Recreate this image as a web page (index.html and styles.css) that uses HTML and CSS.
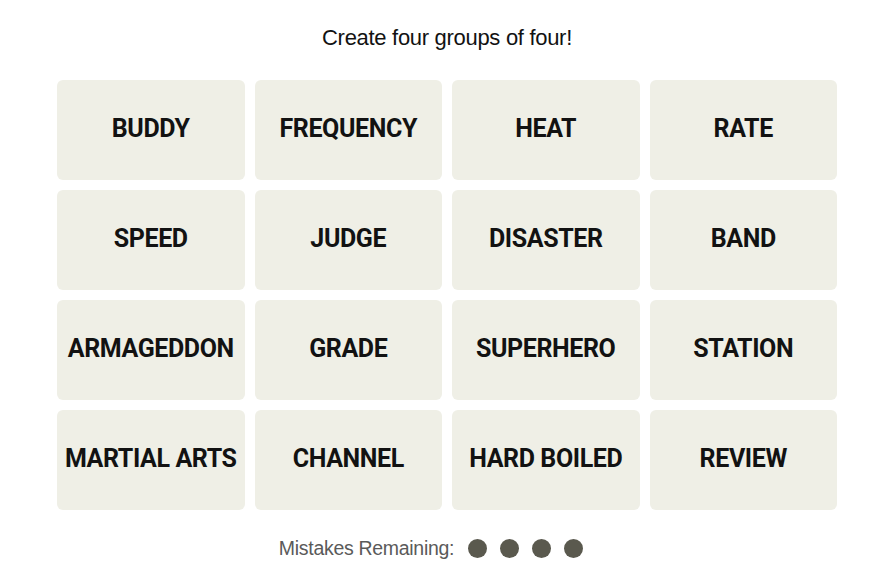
FILE: index.html
```html
<!DOCTYPE html>
<html>
<head>
<meta charset="utf-8">
<link rel="stylesheet" href="styles.css">
</head>
<body>
<main class="game">
  <p class="prompt">Create four groups of four!</p>
  <div class="board">
    <div class="tile">BUDDY</div>
    <div class="tile">FREQUENCY</div>
    <div class="tile">HEAT</div>
    <div class="tile">RATE</div>
    <div class="tile">SPEED</div>
    <div class="tile">JUDGE</div>
    <div class="tile">DISASTER</div>
    <div class="tile">BAND</div>
    <div class="tile">ARMAGEDDON</div>
    <div class="tile">GRADE</div>
    <div class="tile">SUPERHERO</div>
    <div class="tile">STATION</div>
    <div class="tile">MARTIAL ARTS</div>
    <div class="tile">CHANNEL</div>
    <div class="tile">HARD BOILED</div>
    <div class="tile">REVIEW</div>
  </div>
  <div class="mistakes">
    <span class="mistakes-label">Mistakes Remaining:</span>
    <span class="dots">
      <span class="dot"></span><span class="dot"></span><span class="dot"></span><span class="dot"></span>
    </span>
  </div>
</main>
</body>
</html>
```
FILE: styles.css
```css
html, body {
  margin: 0;
  padding: 0;
  background: #ffffff;
}
body {
  font-family: "Liberation Sans", Arial, sans-serif;
  color: #121212;
}
.game {
  width: 780px;
  margin-left: 57px;
  padding-top: 24px;
  display: flex;
  flex-direction: column;
  align-items: center;
}
.prompt {
  margin: 0;
  font-size: 22px;
  line-height: 28px;
  font-family: "Liberation Sans", Arial, sans-serif;
  letter-spacing: -0.3px;
}
.board {
  margin-top: 28px;
  width: 780px;
  display: grid;
  grid-template-columns: repeat(4, 1fr);
  grid-auto-rows: 100px;
  gap: 10px;
}
.tile {
  background: #efefe6;
  border-radius: 6px;
  display: flex;
  align-items: center;
  justify-content: center;
  padding-bottom: 4px;
  box-sizing: border-box;
  font-family: Roboto, "Liberation Sans", sans-serif;
  font-weight: 700;
  font-size: 25px;
  letter-spacing: -0.4px;
  color: #121212;
  white-space: nowrap;
}
.mistakes {
  margin-top: 27px;
  margin-right: 32px;
  display: flex;
  align-items: center;
  gap: 14px;
}
.mistakes-label {
  font-size: 19.5px;
  color: #5a5a5a;
  letter-spacing: -0.3px;
}
.dots {
  display: flex;
  gap: 13px;
}
.dot {
  width: 19px;
  height: 19px;
  border-radius: 50%;
  background: #5a594e;
}
```
